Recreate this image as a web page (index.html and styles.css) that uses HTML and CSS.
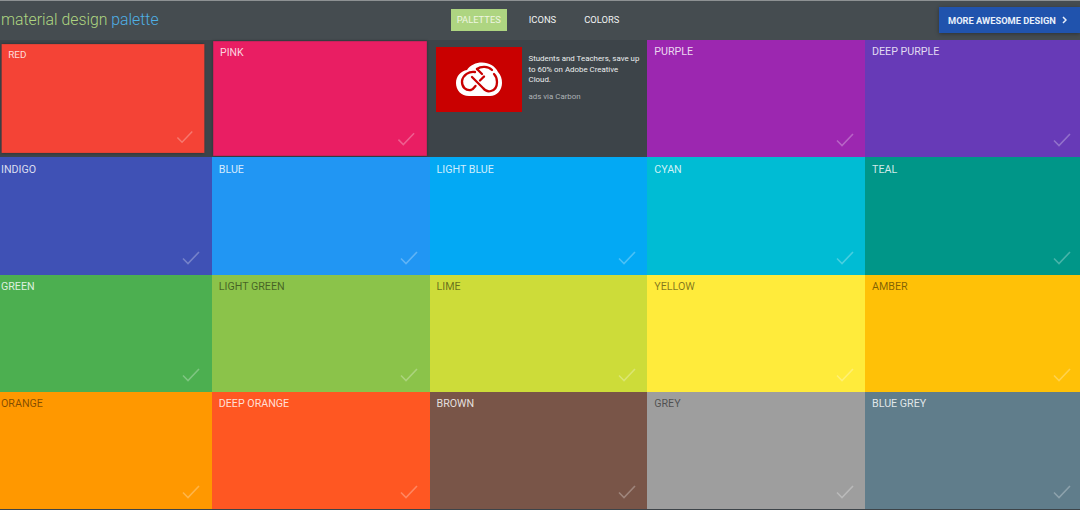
FILE: index.html
```html
<!DOCTYPE html>
<html lang="en">
<head>
<meta charset="utf-8">
<title>Material Design Palette</title>
<link rel="stylesheet" href="styles.css">
</head>
<body>
<svg class="defs" width="0" height="0" aria-hidden="true"><symbol id="check" viewBox="0 0 18 14"><path d="M1 7.5 L6 12.5 L17 1" fill="none" stroke="currentColor" stroke-width="1.6"/></symbol></svg>
<header class="topbar">
  <h1 class="brand"><span class="brand-a">material design</span> <span class="brand-b">palette</span></h1>
  <nav class="tabs">
    <a class="tab tab-active">PALETTES</a>
    <a class="tab">ICONS</a>
    <a class="tab">COLORS</a>
  </nav>
  <a class="cta">MORE AWESOME DESIGN
    <svg class="cta-arrow" viewBox="0 0 5 8" width="5" height="8"><path d="M1 1 L4 4 L1 7" fill="none" stroke="currentColor" stroke-width="1.5"/></svg>
  </a>
</header>
<main class="grid">
  <div class="cell red picked light"><span>RED</span><svg class="tick"><use href="#check"/></svg></div>
  <div class="cell pink hovered light"><span>PINK</span><svg class="tick"><use href="#check"/></svg></div>
  <div class="ad">
    <div class="ad-img">
      <svg viewBox="0 0 86 65" width="86" height="65">
        <path fill="#fff" d="M33 49 C25 49 20 43 20 36 C20 29 25 24 31 23 C34 18 40 15.500 46 15.500 C53 15.500 59 19 62 25 C65 28 66 32 66 36 C66 43 61 49 54 49 Z"/>
        <g fill="none" stroke="#c90000" stroke-width="2.300" stroke-linecap="round" stroke-linejoin="round">
          <path d="M39 25 C33 24 27 28 26 34 C25.500 40 30 44 35 43 C36.500 42.500 38 41 39.500 39"/>
          <path d="M44 33.500 L48 29.500"/>
          <path d="M36 30 L47 41 C49 43.500 52 45 55 44 C59 43 61 39 61 35 C61 32 60 29 58 27"/>
          <path d="M41 22 C45 19 52 19 56 23"/>
          <path d="M41 22 L46 27"/>
        </g>
      </svg>
    </div>
    <div class="ad-copy">
      <p class="ad-text">Students and Teachers, save up to 60% on Adobe Creative Cloud.</p>
      <p class="ad-via">ads via Carbon</p>
    </div>
  </div>
  <div class="cell purple light"><span>PURPLE</span><svg class="tick"><use href="#check"/></svg></div>
  <div class="cell deep-purple light"><span>DEEP PURPLE</span><svg class="tick"><use href="#check"/></svg></div>
  <div class="cell indigo light"><span>INDIGO</span><svg class="tick"><use href="#check"/></svg></div>
  <div class="cell blue light"><span>BLUE</span><svg class="tick"><use href="#check"/></svg></div>
  <div class="cell light-blue light"><span>LIGHT BLUE</span><svg class="tick"><use href="#check"/></svg></div>
  <div class="cell cyan light"><span>CYAN</span><svg class="tick"><use href="#check"/></svg></div>
  <div class="cell teal light"><span>TEAL</span><svg class="tick"><use href="#check"/></svg></div>
  <div class="cell green light"><span>GREEN</span><svg class="tick"><use href="#check"/></svg></div>
  <div class="cell light-green"><span>LIGHT GREEN</span><svg class="tick"><use href="#check"/></svg></div>
  <div class="cell lime"><span>LIME</span><svg class="tick"><use href="#check"/></svg></div>
  <div class="cell yellow"><span>YELLOW</span><svg class="tick"><use href="#check"/></svg></div>
  <div class="cell amber"><span>AMBER</span><svg class="tick"><use href="#check"/></svg></div>
  <div class="cell orange"><span>ORANGE</span><svg class="tick"><use href="#check"/></svg></div>
  <div class="cell deep-orange light"><span>DEEP ORANGE</span><svg class="tick"><use href="#check"/></svg></div>
  <div class="cell brown light"><span>BROWN</span><svg class="tick"><use href="#check"/></svg></div>
  <div class="cell grey"><span>GREY</span><svg class="tick"><use href="#check"/></svg></div>
  <div class="cell blue-grey light"><span>BLUE GREY</span><svg class="tick"><use href="#check"/></svg></div>
</main>
</body>
</html>
```
FILE: styles.css
```css
* { box-sizing: border-box; }
html, body { margin: 0; height: 510px; overflow: hidden; }
body { width: 1080px; background: #3d4449; font-family: Roboto, "Liberation Sans", sans-serif; }
.defs { position: absolute; }
.topbar {
  height: 40px;
  display: grid;
  grid-template-columns: 1fr auto 1fr;
  align-items: center;
  background: #454c50;
  border-top: 1px solid #8d9193;
}
.brand { margin: -1px 0 0; font-size: 15.800px; font-weight: 300; line-height: 40px; padding-left: 1px; white-space: nowrap; }
.brand-a { color: #aed581; }
.brand-b { color: #4fb0e6; }
.tabs { display: flex; font-size: 9.400px; margin: -1px 0 0 4px; }
.tab { color: #f1f3f3; padding: 0 14px; line-height: 22px; height: 22px; }
.tab-active { background: #aed581; color: #eef6e2; padding: 0 6px; margin-right: 8px; }
.cta {
  justify-self: end;
  display: flex;
  align-items: center;
  gap: 6px;
  width: 141px;
  height: 26px;
  margin-top: -1px;
  padding-left: 9px;
  background: #2053ad;
  color: #e9f0fb;
  font-size: 9.300px;
  font-weight: 700;
  white-space: nowrap;
  box-shadow: 0 1px 4px rgba(0,0,0,.35);
  position: relative;
  z-index: 2;
}
.cta-arrow { flex: none; }
.grid {
  display: grid;
  grid-template-columns: repeat(5, 217.750px);
  grid-auto-rows: 117.300px;
  width: 1090px;
  margin-left: -6px;
}
.cell {
  position: relative;
  padding: 6.400px 7px 0;
  font-size: 10.700px;
  line-height: 11px;
  color: rgba(0,0,0,.5);
}
.cell span { display: block; }
.light { color: rgba(255,255,255,.82); }
.tick { position: absolute; right: 11.500px; bottom: 10px; width: 18px; height: 14px; color: #fff; opacity: .28; }
.picked { transform: scale(.93); box-shadow: 0 0 3px rgba(0,0,0,.4); }
.hovered { transform: scale(.98) translateX(-1px); box-shadow: 0 0 3px rgba(0,0,0,.3); }
.ad { display: flex; gap: 7px; padding: 7px 6px; }
.ad-img { flex: none; width: 86px; height: 65px; background: #c90000; }
.ad-copy { font-size: 7.900px; line-height: 10.700px; color: #eceeef; padding-top: 7px; }
.ad-text { margin: 0; }
.ad-via { margin: 6px 0 0; color: #aeb3b6; }
.red { background: #f44336; }
.pink { background: #e91e63; }
.purple { background: #9c27b0; }
.deep-purple { background: #673ab7; }
.indigo { background: #3f51b5; }
.blue { background: #2196f3; }
.light-blue { background: #03a9f4; }
.cyan { background: #00bcd4; }
.teal { background: #009688; }
.green { background: #4caf50; }
.light-green { background: #8bc34a; }
.lime { background: #cddc39; }
.yellow { background: #ffeb3b; }
.amber { background: #ffc107; }
.orange { background: #ff9800; }
.deep-orange { background: #ff5722; }
.brown { background: #795548; }
.grey { background: #9e9e9e; }
.blue-grey { background: #607d8b; }
```
